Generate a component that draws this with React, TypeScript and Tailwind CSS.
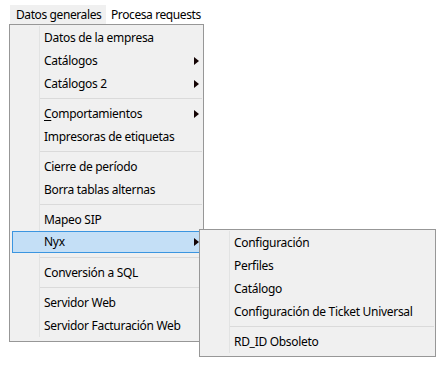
import type { ReactNode } from 'react'

/**
 * Classic Windows style dropdown menu with an open "Nyx" submenu
 */
const Arrow = () => (
  <svg width="5" height="8" viewBox="0 0 5 8" className="shrink-0">
    <path d="M0 0L5 4L0 8Z" fill="#140404" />
  </svg>
)

const Item = ({ children, arrow = false }: { children: ReactNode; arrow?: boolean }) => (
  <div className="flex h-[23px] leading-[23px]">
    <div className="w-[29px] shrink-0" />
    <div className="flex flex-1 items-center border-l border-[#e2e3e3] pl-[4px] pr-[4px]">
      <span className="flex-1 whitespace-nowrap">{children}</span>
      {arrow && <Arrow />}
    </div>
  </div>
)

const Separator = () => (
  <div className="flex h-[7px]">
    <div className="w-[29px] shrink-0" />
    <div className="flex-1 border-l border-[#e2e3e3] pt-[3px] pr-px">
      <div className="h-px bg-[#dadada]" />
    </div>
  </div>
)

export default function App() {
  return (
    <div className="relative h-[365px] w-[442px] bg-white font-['Noto_Sans',sans-serif] text-[12px] tracking-[-0.3px] text-black">
      {/* menu bar */}
      <div className="flex h-[24px] pt-[5px] pl-[10px] leading-[19px] tracking-[-0.4px]">
        <div className="h-[19px] w-[96px] bg-[#f0f0f0] pl-[6px] whitespace-nowrap">Datos generales</div>
        <div className="pl-[5px] whitespace-nowrap">Procesa requests</div>
      </div>

      {/* dropdown */}
      <div className="relative ml-[9px] w-[195px] border border-[#979797] bg-[#f0f0f0] pt-px pb-[4px]">
        <Item>Datos de la empresa</Item>
        <Item arrow>Catálogos</Item>
        <Item arrow>Catálogos 2</Item>
        <Separator />
        <Item arrow>
          <u className="underline-offset-2">C</u>omportamientos
        </Item>
        <Item>Impresoras de etiquetas</Item>
        <Separator />
        <Item>Cierre de período</Item>
        <Item>Borra tablas alternas</Item>
        <Separator />
        <Item>Mapeo SIP</Item>
        <div className="h-[23px]">
          <div className="mx-[2px] flex h-[22px] items-center border border-[#3b95e0] bg-[#c4dff6] pl-[31px] pr-px leading-[20px]">
            <span className="flex-1 whitespace-nowrap">Nyx</span>
            <Arrow />
          </div>
        </div>
        <Separator />
        <Item>Conversión a SQL</Item>
        <Separator />
        <Item>Servidor Web</Item>
        <Item>Servidor Facturación Web</Item>

        {/* Nyx submenu */}
        <div className="absolute left-[189px] top-[204px] w-[237px] border border-[#979797] bg-[#f0f0f0] pt-px pb-[3px]">
          <Item>Configuración</Item>
          <Item>Perfiles</Item>
          <Item>Catálogo</Item>
          <Item>Configuración de Ticket Universal</Item>
          <Separator />
          <Item>RD_ID Obsoleto</Item>
        </div>
      </div>
    </div>
  )
}
